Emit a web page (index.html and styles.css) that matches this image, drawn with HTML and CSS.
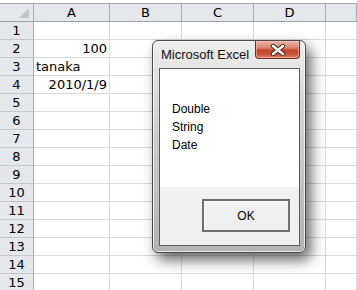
FILE: index.html
```html
<!DOCTYPE html>
<html lang="en">
<head>
    <meta charset="UTF-8">
    <title>Microsoft Excel</title>
    <link rel="stylesheet" href="styles.css">
</head>
<body>
    <div class="topstrip"></div>
    <div class="sheet">
        <div class="hd corner"><span class="tri"></span></div>
        <div class="hd col">A</div>
        <div class="hd col">B</div>
        <div class="hd col">C</div>
        <div class="hd col">D</div>
        <div class="hd col"></div>

        <div class="hd rn">1</div><div class="c"></div><div class="c"></div><div class="c"></div><div class="c"></div><div class="c"></div>
        <div class="hd rn">2</div><div class="c num">100</div><div class="c"></div><div class="c"></div><div class="c"></div><div class="c"></div>
        <div class="hd rn">3</div><div class="c">tanaka</div><div class="c"></div><div class="c"></div><div class="c"></div><div class="c"></div>
        <div class="hd rn">4</div><div class="c num">2010/1/9</div><div class="c"></div><div class="c"></div><div class="c"></div><div class="c"></div>
        <div class="hd rn">5</div><div class="c"></div><div class="c"></div><div class="c"></div><div class="c"></div><div class="c"></div>
        <div class="hd rn">6</div><div class="c"></div><div class="c"></div><div class="c"></div><div class="c"></div><div class="c"></div>
        <div class="hd rn">7</div><div class="c"></div><div class="c"></div><div class="c"></div><div class="c"></div><div class="c"></div>
        <div class="hd rn">8</div><div class="c"></div><div class="c"></div><div class="c"></div><div class="c"></div><div class="c"></div>
        <div class="hd rn">9</div><div class="c"></div><div class="c"></div><div class="c"></div><div class="c"></div><div class="c"></div>
        <div class="hd rn">10</div><div class="c"></div><div class="c"></div><div class="c"></div><div class="c"></div><div class="c"></div>
        <div class="hd rn">11</div><div class="c"></div><div class="c"></div><div class="c"></div><div class="c"></div><div class="c"></div>
        <div class="hd rn">12</div><div class="c"></div><div class="c"></div><div class="c"></div><div class="c"></div><div class="c"></div>
        <div class="hd rn">13</div><div class="c"></div><div class="c"></div><div class="c"></div><div class="c"></div><div class="c"></div>
        <div class="hd rn">14</div><div class="c"></div><div class="c"></div><div class="c"></div><div class="c"></div><div class="c"></div>
        <div class="hd rn">15</div><div class="c"></div><div class="c"></div><div class="c"></div><div class="c"></div><div class="c"></div>
    </div>

    <div class="dialog">
        <div class="titlebar">
            <span class="title">Microsoft Excel</span>
            <div class="close">
                <svg width="16" height="12" viewBox="0 0 16 12">
                    <path d="M3 2 L13 10 M13 2 L3 10" stroke="#3a2a28" stroke-width="4.2" stroke-linecap="round"/>
                    <path d="M3 2 L13 10 M13 2 L3 10" stroke="#fff" stroke-width="2.4" stroke-linecap="round"/>
                </svg>
            </div>
        </div>
        <div class="client">
            <div class="msg">
                <div>Double</div>
                <div>String</div>
                <div>Date</div>
            </div>
            <div class="actions">
                <button class="ok">OK</button>
            </div>
        </div>
    </div>
</body>
</html>
```

FILE: styles.css
```css
body {
    margin: 0;
    background: #fff;
    overflow: hidden;
    font-family: "DejaVu Sans", sans-serif;
}

.topstrip {
    height: 3px;
    border-bottom: 1px solid #a5a9ae;
}

.sheet {
    display: grid;
    grid-template-columns: 34px 76px 72px 72px 72px 1fr;
    grid-template-rows: 18px;
    grid-auto-rows: 18px;
}

.sheet > div {
    box-sizing: border-box;
    border-right: 1px solid #d9dadc;
    border-bottom: 1px solid #d9dadc;
    font-size: 13px;
    line-height: 18px;
    color: #000;
    white-space: nowrap;
    overflow: hidden;
}

.hd {
    background: #e4e7eb;
    color: #222;
    text-align: center;
}

.sheet > .col,
.sheet > .corner {
    border-right: 1px solid #a9adb3;
    border-bottom: 1px solid #9ea2a8;
    line-height: 17px;
}

.sheet > .rn {
    border-right: 1px solid #a9adb3;
    border-bottom: 1px solid #c4c8cd;
    font-size: 13px;
}

.corner {
    position: relative;
}

.tri {
    position: absolute;
    right: 4px;
    bottom: 3px;
    width: 0;
    height: 0;
    border-left: 10px solid transparent;
    border-bottom: 10px solid #c3c6cb;
}

.c {
    padding: 0 2px;
}

.num {
    text-align: right;
}

/* message box */
.dialog {
    position: absolute;
    left: 152px;
    top: 40px;
    width: 154px;
    height: 213px;
    box-sizing: border-box;
    border: 1px solid #4a4a4a;
    border-radius: 6px;
    background: linear-gradient(#eeeeee, #d6d6d6 30%, #b2b2b2);
    box-shadow: inset 0 0 0 1px rgba(255, 255, 255, 0.7), 5px 7px 14px rgba(0, 0, 0, 0.6);
    padding: 0 5px 6px 6px;
    display: flex;
    flex-direction: column;
}

.titlebar {
    height: 27px;
    display: flex;
    align-items: flex-start;
}

.title {
    font-family: "Liberation Sans", sans-serif;
    font-size: 13px;
    line-height: 26px;
    padding-left: 2px;
    margin-top: 1px;
    color: #101010;
}

.close {
    margin-left: auto;
    width: 45px;
    height: 18px;
    box-sizing: border-box;
    border: 1px solid #6d2c21;
    border-top: none;
    border-radius: 0 0 4px 4px;
    background: linear-gradient(#eab2a5 0%, #d98670 40%, #c2442d 55%, #c84e38 75%, #dc8169 100%);
    box-shadow: inset 0 0 0 1px rgba(255, 210, 200, 0.5);
    display: flex;
    justify-content: center;
    align-items: center;
}

.client {
    flex: 1;
    border: 1px solid #5c5c5c;
    background: #f0f0f0;
    display: flex;
    flex-direction: column;
}

.msg {
    height: 118px;
    box-sizing: border-box;
    background: #fff;
    padding: 31px 0 0 12px;
    font-family: "Liberation Sans", sans-serif;
    font-size: 12px;
    line-height: 18px;
}

.actions {
    flex: 1;
    display: flex;
    justify-content: flex-end;
    align-items: flex-start;
    padding: 12px 9px 0 0;
}

.ok {
    width: 88px;
    height: 33px;
    box-sizing: border-box;
    border: 2px solid #6e6e6e;
    background: #efefef;
    box-shadow: inset 1px 1px 0 #fff;
    font-family: "Liberation Sans", sans-serif;
    font-size: 12px;
    color: #000;
    padding: 0;
}
```
